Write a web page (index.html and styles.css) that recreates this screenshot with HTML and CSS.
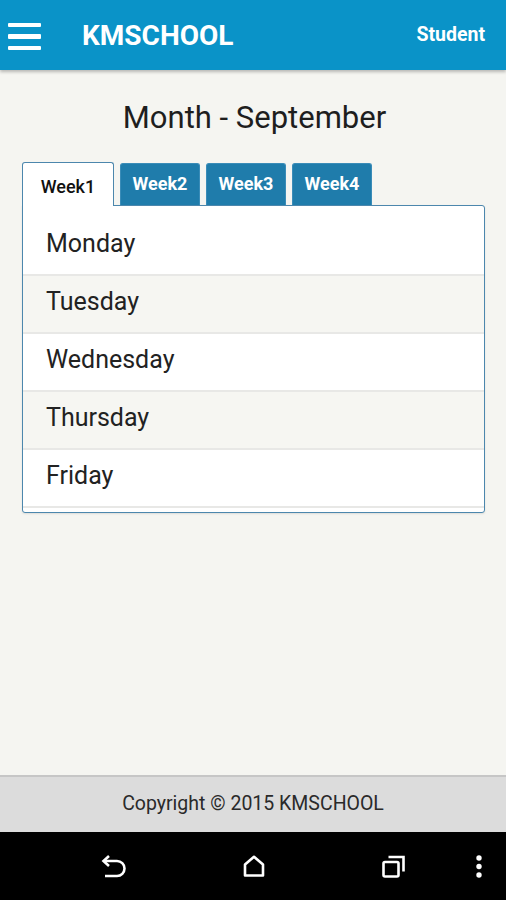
FILE: index.html
```html
<!DOCTYPE html>
<html lang="en">
<head>
    <meta charset="UTF-8">
    <meta name="viewport" content="width=device-width, initial-scale=1.0">
    <title>KMSCHOOL</title>
    <link rel="stylesheet" href="styles.css">
</head>
<body>
    <header class="topbar">
        <div class="menu-icon">
            <span></span>
            <span></span>
            <span></span>
        </div>
        <div class="brand">KMSCHOOL</div>
        <div class="user">Student</div>
    </header>

    <main class="content">
        <h1 class="month-title">Month - September</h1>

        <div class="tabs">
            <div class="tab active">Week1</div>
            <div class="tab">Week2</div>
            <div class="tab">Week3</div>
            <div class="tab">Week4</div>
        </div>

        <div class="tab-pane">
            <div class="day">Monday</div>
            <div class="day">Tuesday</div>
            <div class="day">Wednesday</div>
            <div class="day">Thursday</div>
            <div class="day">Friday</div>
        </div>
    </main>

    <footer class="footer">Copyright &copy; 2015 KMSCHOOL</footer>

    <nav class="navbar">
        <svg class="nav-back" width="26" height="23" viewBox="0 0 26 23">
            <path d="M4 6 H17 a7.5 7.5 0 0 1 0 15 H5" fill="none" stroke="#fff" stroke-width="2.6"/>
            <path d="M9 1 L3.5 6 L9 11" fill="none" stroke="#fff" stroke-width="2.6"/>
        </svg>
        <svg class="nav-home" width="22" height="22" viewBox="0 0 22 22">
            <path d="M2 9.5 L11 1.8 L20 9.5 V20.5 H2 Z" fill="none" stroke="#fff" stroke-width="2.6" stroke-linejoin="round"/>
        </svg>
        <svg class="nav-recent" width="24" height="23" viewBox="0 0 24 23">
            <rect x="1.5" y="7" width="15" height="14.5" rx="1.5" fill="none" stroke="#fff" stroke-width="2.6"/>
            <path d="M6.5 2 H21.5 V16.5" fill="none" stroke="#fff" stroke-width="2.6"/>
        </svg>
        <svg class="nav-dots" width="6" height="23" viewBox="0 0 6 23">
            <circle cx="3" cy="3" r="2.7" fill="#fff"/>
            <circle cx="3" cy="11.5" r="2.7" fill="#fff"/>
            <circle cx="3" cy="20" r="2.7" fill="#fff"/>
        </svg>
    </nav>
</body>
</html>
```

FILE: styles.css
```css
:root {
    --primary-color: #0a93c8;
    --tab-color: #1f7cab;
    --pane-border: #4c87ad;
    --page-bg: #f5f5f1;
    --text-color: #222;
}

* {
    box-sizing: border-box;
}

html, body {
    height: 100%;
}

body {
    font-family: Roboto, "Noto Sans", sans-serif;
    margin: 0;
    padding: 0;
    color: var(--text-color);
    background-color: var(--page-bg);
    display: flex;
    flex-direction: column;
    height: 900px;
}

.topbar {
    height: 70px;
    flex-shrink: 0;
    background-color: var(--primary-color);
    box-shadow: 0 2px 3px rgba(0, 0, 0, 0.25);
    display: flex;
    align-items: center;
    padding: 0 21px 0 8px;
    color: white;
    position: relative;
    z-index: 1;
}

.menu-icon {
    display: flex;
    flex-direction: column;
    gap: 7px;
    width: 33px;
    margin-top: 3px;
}

.menu-icon span {
    display: block;
    height: 4.5px;
    background-color: white;
    border-radius: 1px;
}

.brand {
    font-size: 28px;
    font-weight: bold;
    margin-left: 41px;
}

.user {
    margin-left: auto;
    font-size: 19.5px;
    font-weight: bold;
    margin-top: -2px;
}

.content {
    flex: 1;
    padding: 0 21px 0 22px;
}

.month-title {
    margin: 30px 0 26px;
    text-align: center;
    font-size: 31px;
    line-height: 36px;
    font-weight: normal;
    color: #1e1e1e;
    padding-left: 2px;
}

.tabs {
    display: flex;
    gap: 6px;
    align-items: flex-end;
    height: 43px;
}

.tab {
    width: 80px;
    height: 42px;
    background-color: var(--tab-color);
    color: white;
    font-size: 18px;
    font-weight: bold;
    text-align: center;
    line-height: 40px;
    border-radius: 3px 3px 0 0;
    border: 1px solid #3a8cb8;
    border-bottom: none;
}

.tab.active {
    width: 92px;
    height: 44px;
    background-color: white;
    color: #111;
    font-weight: 500;
    line-height: 48px;
    border-color: var(--pane-border);
    margin-bottom: -1px;
    position: relative;
    z-index: 1;
}

.tab-pane {
    background-color: white;
    border: 1px solid var(--pane-border);
    border-radius: 0 3px 3px 3px;
    padding: 12px 0 4px;
    box-shadow: 0 1px 2px rgba(0, 0, 0, 0.1);
}

.day {
    height: 58px;
    line-height: 52px;
    padding-left: 23px;
    font-size: 25px;
    color: var(--text-color);
    border-bottom: 2px solid #e8e8e6;
}

.day:nth-child(even) {
    background-color: #f6f6f2;
}

.footer {
    height: 57px;
    flex-shrink: 0;
    background-color: #dcdcdc;
    border-top: 2px solid #c6c6c6;
    text-align: center;
    line-height: 54px;
    font-size: 19.5px;
    color: #2a2a2a;
}

.navbar {
    height: 68px;
    flex-shrink: 0;
    background-color: black;
    display: flex;
    align-items: center;
    padding-left: 100px;
}

.navbar svg {
    flex-shrink: 0;
}

.nav-home,
.nav-recent {
    margin-left: 117px;
}

.nav-dots {
    margin-left: 70px;
}
```
